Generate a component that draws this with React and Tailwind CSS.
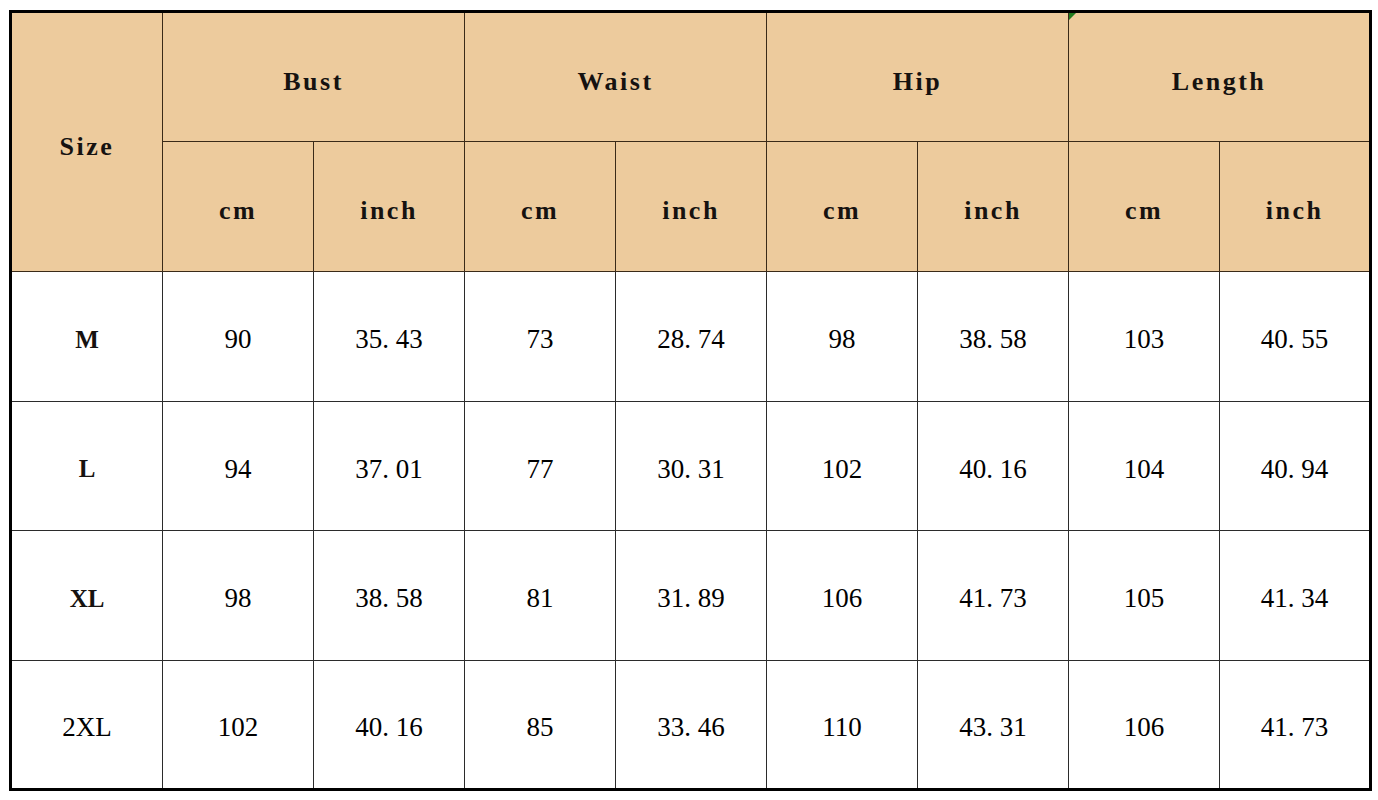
import React from 'react';

const groups = ['Bust', 'Waist', 'Hip', 'Length'];

const rows = [
  ['M', '90', '35. 43', '73', '28. 74', '98', '38. 58', '103', '40. 55'],
  ['L', '94', '37. 01', '77', '30. 31', '102', '40. 16', '104', '40. 94'],
  ['XL', '98', '38. 58', '81', '31. 89', '106', '41. 73', '105', '41. 34'],
  ['2XL', '102', '40. 16', '85', '33. 46', '110', '43. 31', '106', '41. 73'],
];

const App = () => {
  return (
    <div className="w-[1378px] h-[800px] bg-white pt-[10px] pl-[9px]" style={{ fontFamily: '"Liberation Serif", "DejaVu Serif", serif' }}>
      <table className="border-collapse border-[3px] border-black text-[#161210] table-fixed w-[1362px]">
        <colgroup>
          <col className="w-[152px]" />
          {Array.from({ length: 8 }).map((_, i) => (
            <col key={i} className="w-[151px]" />
          ))}
        </colgroup>
        <thead className="bg-[#edcb9d]">
          <tr className="h-[130px]">
            <th rowSpan={2} className="border border-[#3a2a18] font-bold text-[26px] tracking-[2.5px] pt-[8px]">
              Size
            </th>
            {groups.map((g) => (
              <th key={g} colSpan={2} className="relative border border-[#3a2a18] font-bold text-[26px] tracking-[2.5px] pt-[8px]">
                {g === 'Length' && (
                  <span className="absolute left-0 top-0 w-0 h-0 border-t-[7px] border-r-[7px] border-t-[#1f7a1f] border-r-transparent" />
                )}
                {g}
              </th>
            ))}
          </tr>
          <tr className="h-[130px]">
            {groups.map((g) => (
              <React.Fragment key={g}>
                <th className="border border-[#3a2a18] font-bold text-[26px] tracking-[2.5px] pt-[8px]">cm</th>
                <th className="border border-[#3a2a18] font-bold text-[26px] tracking-[2.5px] pt-[8px]">inch</th>
              </React.Fragment>
            ))}
          </tr>
        </thead>
        <tbody>
          {rows.map((r, i) => (
            <tr key={i} className="h-[129.5px]">
              {r.map((c, j) =>
                j === 0 && c !== '2XL' ? (
                  <td key={j} className="border border-[#2b2b2b] text-center font-bold text-[25px] pt-[6px]">
                    {c}
                  </td>
                ) : (
                  <td key={j} className="border border-[#2b2b2b] text-center text-[27px] pt-[6px] text-black">
                    {c}
                  </td>
                )
              )}
            </tr>
          ))}
        </tbody>
      </table>
    </div>
  );
};

export default App;
